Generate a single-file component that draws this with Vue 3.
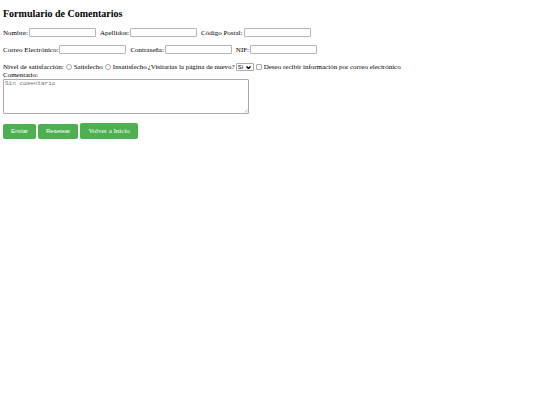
<template>
  <main>
    <h1>Formulario de Comentarios</h1>
    <form @submit.prevent>
      <div class="row">
        <div v-for="field in personal" :key="field.id" class="field">
          <label :for="field.id">{{ field.label }}</label>
          <input :id="field.id" v-model="form[field.id]" :type="field.type" class="text">
        </div>
      </div>

      <div class="row">
        <div v-for="field in account" :key="field.id" class="field">
          <label :for="field.id">{{ field.label }}</label>
          <input :id="field.id" v-model="form[field.id]" :type="field.type" class="text">
        </div>
      </div>

      <div class="options">
        <span>Nivel de satisfacción:</span>
        <input id="satisfecho" v-model="form.nivel" type="radio" name="nivel" value="satisfecho">
        <label for="satisfecho">Satisfecho</label>
        <input id="insatisfecho" v-model="form.nivel" type="radio" name="nivel" value="insatisfecho">
        <label for="insatisfecho">Insatisfecho</label>
        <label for="volver">¿Visitarías la página de nuevo?</label>
        <span class="select">
          <select id="volver" v-model="form.volver">
            <option value="si">Sí</option>
            <option value="no">No</option>
          </select>
          <svg viewBox="0 0 10 6"><path d="M1 1l4 4 4-4" /></svg>
        </span>
        <input id="info" v-model="form.info" type="checkbox">
        <label for="info">Deseo recibir información por correo electrónico</label>
      </div>

      <label for="comentario" class="comment">Comentario:</label>
      <div class="area">
        <textarea id="comentario" v-model="form.comentario" placeholder="Sin comentario"></textarea>
        <svg viewBox="0 0 8 8"><path d="M1 7l6-6M5 7l2-2" /></svg>
      </div>

      <div class="buttons">
        <button type="submit">Enviar</button>
        <button type="reset">Resetear</button>
        <a href="#">Volver a Inicio</a>
      </div>
    </form>
  </main>
</template>

<script setup>
  import {reactive} from "vue";

  const personal = [
    {id: "nombre", label: "Nombre:", type: "text"},
    {id: "apellidos", label: "Apellidos:", type: "text"},
    {id: "postal", label: "Código Postal:", type: "text"}
  ];

  const account = [
    {id: "correo", label: "Correo Electrónico:", type: "email"},
    {id: "clave", label: "Contraseña:", type: "password"},
    {id: "nif", label: "NIF:", type: "text"}
  ];

  const form = reactive({
    nombre: "",
    apellidos: "",
    postal: "",
    correo: "",
    clave: "",
    nif: "",
    nivel: "",
    volver: "si",
    info: false,
    comentario: ""
  });
</script>

<style>
  body{
    background-color: white;
  }
</style>

<style scoped>
  main{
    padding: 8px 3px;
    font-family: "Liberation Serif", serif;
    font-size: 7px;
    line-height: 8px;
    color: black;
  }

  h1{
    margin: 0 0 9px;
    font-size: 10px;
    line-height: 11px;
  }

  input, select, textarea, button{
    box-sizing: border-box;
    margin: 0;
    font-family: "Liberation Sans", sans-serif;
    font-size: 6px;
  }

  .row{
    display: flex;
    flex-wrap: wrap;
    gap: 4px;
    margin-bottom: 8px;
  }

  .field{
    display: flex;
    align-items: center;
    gap: 1px;
  }

  .text{
    width: 67px;
    height: 9px;
    padding: 0 1px;
    border: 1px solid #b5b5b5;
    border-radius: 1px;
    background-color: white;
  }

  .options{
    display: flex;
    flex-wrap: wrap;
    align-items: center;
    gap: 1px;
    margin-top: 9px;
  }

  input[type="radio"], input[type="checkbox"]{
    appearance: none;
    width: 6px;
    height: 6px;
    margin: 0 1px;
    border: 1px solid #aaa;
    background-color: white;
  }

  input[type="radio"]{
    border-radius: 50%;
  }

  input[type="checkbox"]{
    border-radius: 1px;
  }

  input:checked{
    background-color: #0075ff;
  }

  .select{
    position: relative;
    display: flex;
  }

  select{
    appearance: none;
    width: 18px;
    height: 8px;
    padding: 0 1px;
    border: 1px solid #aaa;
    border-radius: 1px;
    background-color: white;
    color: black;
    line-height: 6px;
  }

  .select svg{
    position: absolute;
    top: 3px;
    right: 3px;
    width: 5px;
    height: 3px;
    fill: none;
    stroke: black;
    stroke-width: 3;
    pointer-events: none;
  }

  .comment{
    display: block;
  }

  .area{
    position: relative;
    width: 246px;
    max-width: 100%;
  }

  textarea{
    display: block;
    width: 100%;
    height: 35px;
    padding: 1px;
    border: 1px solid #aaa;
    border-radius: 1px;
    font-family: "Liberation Mono", monospace;
    line-height: 6px;
    resize: none;
  }

  textarea::placeholder{
    color: #757575;
  }

  .area svg{
    position: absolute;
    right: 1px;
    bottom: 1px;
    width: 4px;
    height: 4px;
    stroke: #888;
    pointer-events: none;
  }

  .buttons{
    display: flex;
    align-items: center;
    gap: 2px;
    margin-top: 9px;
  }

  button, a{
    padding: 4px 8px;
    border: none;
    border-radius: 2px;
    background-color: #4caf50;
    color: white;
    cursor: pointer;
  }

  button{
    line-height: 7px;
  }

  a{
    text-decoration: none;
  }
</style>
